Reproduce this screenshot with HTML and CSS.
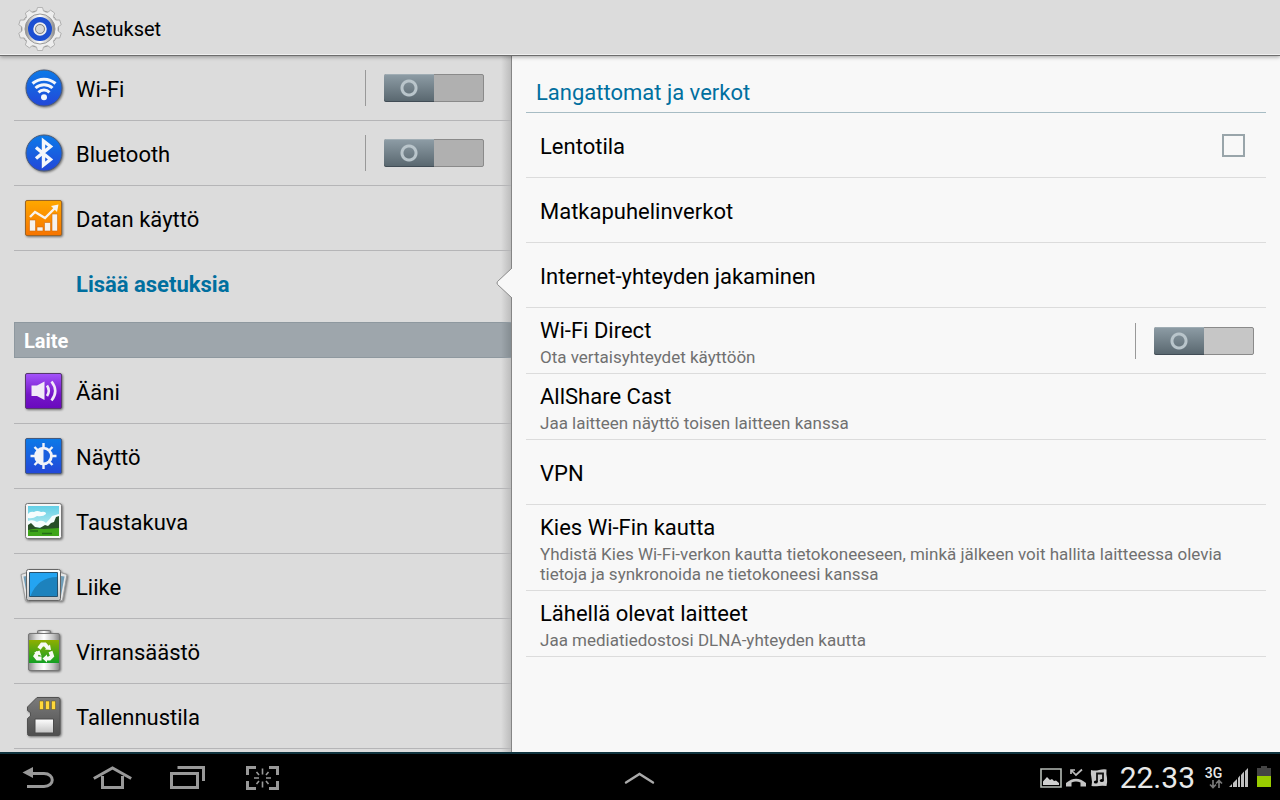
FILE: index.html
```
<!DOCTYPE html>
<html lang="fi">
<head>
    <meta charset="UTF-8">
    <meta name="viewport" content="width=device-width, initial-scale=1.0">
    <title>Asetukset</title>
    <link rel="stylesheet" href="styles.css">
</head>
<body>
    <!-- Shared gradients for the icons -->
    <svg class="defs" width="0" height="0" aria-hidden="true">
        <defs>
            <linearGradient id="blue" x2="0" y2="1"><stop stop-color="#0b7ae8"/><stop offset="1" stop-color="#2347d8"/></linearGradient>
            <linearGradient id="orange" x2="0" y2="1"><stop stop-color="#ffa800"/><stop offset="1" stop-color="#f77400"/></linearGradient>
            <linearGradient id="purple" x2="0" y2="1"><stop stop-color="#a454fb"/><stop offset=".6" stop-color="#7516c8"/><stop offset="1" stop-color="#6909bd"/></linearGradient>
            <linearGradient id="silver" x2="0" y2="1"><stop stop-color="#ffffff"/><stop offset="1" stop-color="#c4c4c4"/></linearGradient>
            <linearGradient id="metal"><stop stop-color="#8d8d8d"/><stop offset=".25" stop-color="#d8d8d8"/><stop offset=".5" stop-color="#ffffff"/><stop offset=".8" stop-color="#c2c2c2"/><stop offset="1" stop-color="#858585"/></linearGradient>
            <linearGradient id="green" x2="0" y2="1"><stop stop-color="#8fae00"/><stop offset="1" stop-color="#12a024"/></linearGradient>
            <linearGradient id="card" x2="0" y2="1"><stop stop-color="#7b7b7b"/><stop offset="1" stop-color="#4f4f4f"/></linearGradient>
            <linearGradient id="sky" x2="0" y2="1"><stop stop-color="#63cfe6"/><stop offset="1" stop-color="#d9f7f2"/></linearGradient>
        </defs>
    </svg>

    <header class="title-bar">
        <svg class="gear" width="48" height="48" viewBox="0 0 48 48" aria-hidden="true">
            <circle cx="24" cy="24" r="18.500" fill="#ededed" stroke="#9a9a9a"/>
            <g fill="#ededed" stroke="#a8a8a8" stroke-width=".8">
                <path id="tooth" d="M18.500 8Q21 6.500 21.500 2.500H26.500Q27 6.500 29.500 8M18.500 40Q21 41.500 21.500 45.500H26.500Q27 41.500 29.500 40"/>
                <use href="#tooth" transform="rotate(36 24 24)"/>
                <use href="#tooth" transform="rotate(72 24 24)"/>
                <use href="#tooth" transform="rotate(108 24 24)"/>
                <use href="#tooth" transform="rotate(144 24 24)"/>
            </g>
            <circle cx="24" cy="24" r="17.500" fill="#eeeeee"/>
            <circle cx="24" cy="24" r="15" fill="url(#metal)" stroke="#999999"/>
            <circle cx="24" cy="24" r="9" fill="none" stroke="#1c4fd2" stroke-width="6"/>
            <circle cx="24" cy="24" r="6" fill="#d4d4d4" stroke="#f0f0f0" stroke-width="1.500"/>
            <circle cx="24" cy="24" r="4.500" fill="#dadada" stroke="#858585"/>
        </svg>
        <h1>Asetukset</h1>
    </header>

    <main>
        <nav class="sidebar" aria-label="Asetukset">
            <ul class="menu">
                <li>
                    <svg class="icon" viewBox="0 0 48 48" aria-hidden="true">
                        <circle cx="24" cy="24" r="18" fill="url(#blue)" stroke="#4a5a78"/>
                        <g fill="none" stroke="#f4f7fb" stroke-width="3">
                            <path d="M12.500 19.500a17.500 17.500 0 0 1 23 0M15.500 24a12.500 12.500 0 0 1 17 0M18.500 28.300a8 8 0 0 1 11 0"/>
                        </g>
                        <circle cx="24" cy="33.200" r="3" fill="#f4f7fb"/>
                    </svg>
                    <a href="#wifi">Wi-Fi</a>
                    <input class="switch" type="checkbox" role="switch" aria-label="Wi-Fi">
                </li>
                <li>
                    <svg class="icon" viewBox="0 0 48 48" aria-hidden="true">
                        <circle cx="24" cy="24" r="18" fill="url(#blue)" stroke="#4a5a78"/>
                        <path d="M16 18.500 30.500 30.500 23.500 36V12L30.500 17.500 16 29.500" fill="none" stroke="#f4f7fb" stroke-width="3.400"/>
                    </svg>
                    <a href="#bluetooth">Bluetooth</a>
                    <input class="switch" type="checkbox" role="switch" aria-label="Bluetooth">
                </li>
                <li>
                    <svg class="icon" viewBox="0 0 48 48" aria-hidden="true">
                        <rect x="5.500" y="6.500" width="36" height="35" rx="1.500" fill="url(#orange)" stroke="#9a6528"/>
                        <g fill="#f5f2ef" stroke="#cf6b13" stroke-width=".6">
                            <path d="M9.500 26h6v11h-6zM17 33h6v4h-6zM24.500 28.500h6V37h-6zM32 20h5.500v17H32z"/>
                        </g>
                        <path d="M10 23 15 18 25 24 35 14" fill="none" stroke="#f8f4ef" stroke-width="2.400"/>
                        <path d="M31 12 38.500 10.500 37 18z" fill="#f8f4ef"/>
                    </svg>
                    <a href="#data">Datan käyttö</a>
                </li>
                <li class="selected">
                    <a href="#more" aria-current="page">Lisää asetuksia</a>
                    <svg class="pointer" viewBox="0 0 16 32" aria-hidden="true">
                        <path d="M16 1 1.500 14.500Q.5 16 1.500 17.500L16 31" fill="#f8f8f8" stroke="#8a8a8a"/>
                    </svg>
                </li>
            </ul>

            <h2>Laite</h2>

            <ul class="menu">
                <li>
                    <svg class="icon" viewBox="0 0 48 48" aria-hidden="true">
                        <rect x="5.500" y="6.500" width="36" height="35" rx="1.500" fill="url(#purple)" stroke="#57386e"/>
                        <path d="M11.500 18.500H17L24.500 14.500V33L17 29H11.500z" fill="#f1eaf7"/>
                        <path d="M27 18.500Q30.500 23.700 27 29M31.500 14.500Q39 24 31.500 33.500" fill="none" stroke="#f1eaf7" stroke-width="2.600"/>
                    </svg>
                    <a href="#sound">Ääni</a>
                </li>
                <li>
                    <svg class="icon" viewBox="0 0 48 48" aria-hidden="true">
                        <rect x="5.500" y="6.500" width="36" height="35" rx="1.500" fill="url(#blue)" stroke="#46597c"/>
                        <path d="M23.500 11v26M10.500 24h26M14.500 15 32.500 33M32.500 15 14.500 33" stroke="#f1f3f8" stroke-width="2.400"/>
                        <circle cx="23.500" cy="24" r="9.300" fill="#f1f3f8"/>
                        <path d="M23.500 17.500a6.500 6.500 0 0 1 0 13z" fill="#1a5fdf"/>
                    </svg>
                    <a href="#display">Näyttö</a>
                </li>
                <li>
                    <svg class="icon" viewBox="0 0 48 48" aria-hidden="true">
                        <rect x="5.500" y="6.500" width="36" height="35" rx="2" fill="#f6f6f6" stroke="#777777"/>
                        <path d="M8 9h31v30H8z" fill="url(#sky)"/>
                        <path d="M8 17Q10 14 14 15Q17 13 21 15Q26 14 26 17Q23 20 17 19Q13 22 8 21zM8 24Q13 22 17 25Q22 22 26 26Q30 22 32 19L39 17V30H8z" fill="#f5fdfd"/>
                        <path d="M8 28 11 26 15 30 20 31 25 28 28 29 31 26 34 25 36 20 39 19V35H8z" fill="#274f27"/>
                        <path d="M8 33Q16 31 24 32L39 31V39H8z" fill="#3fa51a"/>
                        <path d="M22 36.500h10M10 34h8" stroke="#236c17" stroke-width="1.500"/>
                    </svg>
                    <a href="#wallpaper">Taustakuva</a>
                </li>
                <li>
                    <svg class="icon" viewBox="0 0 48 48" aria-hidden="true">
                        <g fill="#e6e6e6" stroke="#9b9b9b">
                            <path d="M1 12.500 9 10V39L5.500 38.500zM47 12.500 39 10V39L42.500 38.500z"/>
                        </g>
                        <path d="M3.500 14.500 7 14V34zM44.500 14.500 41 14V34z" fill="#6f9db8"/>
                        <rect x="6.500" y="7.500" width="34" height="31" rx="2" fill="url(#silver)" stroke="#666666"/>
                        <path d="M9.500 10.500h28v24h-28z" fill="#1d82bd" stroke="#28516c"/>
                        <path d="M10 11H37V15Q18 15 10.500 34H10z" fill="#24a4f1"/>
                    </svg>
                    <a href="#motion">Liike</a>
                </li>
                <li>
                    <svg class="icon" viewBox="0 0 48 48" aria-hidden="true">
                        <rect x="17.500" y="3.500" width="13" height="5" rx="1" fill="url(#metal)" stroke="#777777"/>
                        <rect x="8.500" y="6.500" width="31" height="37" rx="1.500" fill="url(#metal)" stroke="#777777"/>
                        <path d="M9 13h30v23H9z" fill="url(#green)"/>
                        <g fill="none" stroke="#f7fbf5" stroke-width="4">
                            <path d="M19 21.500 22 17.500H25L28 21M30.500 24.500 32 29 29.500 31.500H25.500M21.500 31.500H17.500L15.500 29 18 25"/>
                        </g>
                        <path d="M25 22.500 31 23 30 17.500zM27 27.500V35.500L22.500 31.500zM14 25.500 19.500 23.500 21.500 29z" fill="#f7fbf5"/>
                    </svg>
                    <a href="#power">Virransäästö</a>
                </li>
                <li>
                    <svg class="icon" viewBox="0 0 48 48" aria-hidden="true">
                        <path d="M17 5.500H38Q40 5.500 40 7.500V41.500Q40 43.500 38 43.500H9Q7.500 43.500 7.500 41.500V26.500L10.500 24V20.500L7.500 18.500V15z" fill="url(#card)" stroke="#515151"/>
                        <path d="M19.500 9h4v8.500h-4zM25.500 9h4v8.500h-4zM31.500 9h4v8.500h-4z" fill="#ffd83a" stroke="#5a5127" stroke-width=".5"/>
                        <path d="M15 27h18.500v14H15z" fill="url(#silver)" stroke="#4c4c4c"/>
                    </svg>
                    <a href="#storage">Tallennustila</a>
                </li>
            </ul>
        </nav>

        <section class="content">
            <h2>Langattomat ja verkot</h2>
            <ul class="settings">
                <li>
                    <label for="airplane">Lentotila</label>
                    <input id="airplane" class="check" type="checkbox">
                </li>
                <li><a href="#mobile">Matkapuhelinverkot</a></li>
                <li><a href="#tethering">Internet-yhteyden jakaminen</a></li>
                <li class="detailed">
                    <div>
                        <a href="#direct">Wi-Fi Direct</a>
                        <p>Ota vertaisyhteydet käyttöön</p>
                    </div>
                    <input class="switch light" type="checkbox" role="switch" aria-label="Wi-Fi Direct">
                </li>
                <li class="detailed">
                    <div>
                        <a href="#cast">AllShare Cast</a>
                        <p>Jaa laitteen näyttö toisen laitteen kanssa</p>
                    </div>
                </li>
                <li><a href="#vpn">VPN</a></li>
                <li class="detailed">
                    <div>
                        <a href="#kies">Kies Wi-Fin kautta</a>
                        <p>Yhdistä Kies Wi-Fi-verkon kautta tietokoneeseen, minkä jälkeen voit hallita laitteessa olevia tietoja ja synkronoida ne tietokoneesi kanssa</p>
                    </div>
                </li>
                <li class="detailed">
                    <div>
                        <a href="#nearby">Lähellä olevat laitteet</a>
                        <p>Jaa mediatiedostosi DLNA-yhteyden kautta</p>
                    </div>
                </li>
            </ul>
        </section>
    </main>

    <footer class="system-bar">
        <div class="nav-buttons">
            <button type="button" aria-label="Takaisin">
                <svg width="40" height="24" viewBox="0 0 40 24"><path d="M14 7.500H26C37 7.500 37 20.500 26 20.500H9" fill="none" stroke="#999999" stroke-width="3"/><path d="M4.500 6.500 15 1V12z" fill="#999999"/></svg>
            </button>
            <button type="button" aria-label="Koti">
                <svg width="40" height="24" viewBox="0 0 40 24"><path d="M.8 12.500 19.500 2 38.200 12.500M9.500 10V21.500H29.500V10" fill="none" stroke="#999999" stroke-width="3"/></svg>
            </button>
            <button type="button" aria-label="Viimeisimmät">
                <svg width="40" height="24" viewBox="0 0 40 24"><path d="M3.500 7.500H29.500V21.500H3.500zM9.500 1.500H35.500V15" fill="none" stroke="#999999" stroke-width="3"/></svg>
            </button>
            <button type="button" aria-label="Kuvakaappaus">
                <svg width="40" height="24" viewBox="0 0 40 24"><path d="M4.500 9V1.500H13M26 1.500H34.500V9M34.500 15V22.500H26M13 22.500H4.500V15" fill="none" stroke="#999999" stroke-width="3"/><path d="M19.500 2.500v6M19.500 15.500v6M11 12h5M23 12h5M13.500 6 16 9M25.500 6 23 9M13.500 18 16 15M25.500 18 23 15" stroke="#999999" stroke-width="1.600"/></svg>
            </button>
        </div>

        <button type="button" class="drawer" aria-label="Avaa sovellukset">
            <svg width="32" height="16" viewBox="0 0 32 16"><path d="M2 12.500 15.500 4 29 12.500" fill="none" stroke="#aaaaaa" stroke-width="2.400" stroke-linecap="round"/></svg>
        </button>

        <div class="status">
            <svg width="22" height="24" viewBox="0 0 22 24" aria-hidden="true"><path d="M1 3h20v18H1z" fill="none" stroke="#b5bbb5" stroke-width="1.600"/><path d="M3 19V15.500L7 11 10 14 12 13 14 15 16 14.500 19 17V19z" fill="#d0d0d0"/></svg>
            <svg width="22" height="24" viewBox="0 0 22 24" aria-hidden="true"><path d="M6 4 11 9 17 3.500M6 8V4H10" fill="none" stroke="#bbbbbb" stroke-width="1.700"/><path d="M1 20.500V17Q11 8.500 21 17V20.500H15.500V16.500Q11 14.500 6.500 16.500V20.500z" fill="#c4c4c4"/></svg>
            <svg width="18" height="24" viewBox="0 0 18 24" aria-hidden="true"><path d="M1 4Q5 5 9 4Q13 3 16.500 3.500Q16 8 17 12Q17.500 16 16.500 20Q12 19.500 9 20Q5 20.500 1.500 20Q2.500 16 1.500 12Q.5 8 1 4z" fill="#c8c8c8"/><path d="M7 16V7.500H13V14.500" fill="none" stroke="#111111" stroke-width="1.800"/><ellipse cx="5.800" cy="16" rx="2" ry="1.600"/><ellipse cx="11.800" cy="14.500" rx="2" ry="1.600"/></svg>
            <time datetime="22:33">22.33</time>
            <div class="network">
                <span>3G</span>
                <svg width="14" height="10" viewBox="0 0 14 10" aria-hidden="true"><path d="M4 1V8M1 5.500 4 8.500 7 5.500M10 9V2M7 4.500 10 1.500 13 4.500" fill="none" stroke="#777777" stroke-width="1.700"/></svg>
            </div>
            <svg width="20" height="24" viewBox="0 0 20 24" aria-hidden="true"><path d="M0 21 3 18V21zM4 17 8 13V21H4zM9 12 11 9.500V21H9zM12 9 15 5.500V21H12zM16 5 19 2V21H16z" fill="#c0c0c0"/></svg>
            <svg width="14" height="24" viewBox="0 0 14 24" aria-hidden="true"><path d="M0 2H4V0H10V2H14V10H0z" fill="#444444"/><path d="M0 10H14V21H0z" fill="#99cc00"/></svg>
        </div>
    </footer>
</body>
</html>
```
FILE: styles.css
```
:root {
    --accent: #006f9f;
    --panel: #dcdcdc;
    --content: #f8f8f8;
    --divider: #b5b5b7;
    --divider-light: #dcdcdc;
}

* {
    box-sizing: border-box;
}

body {
    display: flex;
    flex-direction: column;
    height: 100vh;
    margin: 0;
    font-family: Roboto, "Liberation Sans", sans-serif;
    font-size: 22px;
    line-height: 28px;
    color: #000;
    background: var(--content);
}

h1, h2, p, ul {
    margin: 0;
    padding: 0;
    font-weight: 400;
}

ul {
    list-style: none;
}

a {
    color: inherit;
    text-decoration: none;
}

svg {
    flex: none;
    display: block;
}

.defs {
    position: absolute;
}

.title-bar {
    position: relative;
    z-index: 2;
    display: flex;
    align-items: center;
    gap: 8px;
    padding: 5px 16px 2px;
    background: var(--panel);
    border-bottom: 1px solid #6d6d6d;
    box-shadow: 0 1px 4px rgba(0, 0, 0, 0.35), inset 0 -1px #f0f0f0;
}

.title-bar h1 {
    font-size: 20px;
}

main {
    display: grid;
    grid-template-columns: 2fr 3fr;
    flex: 1;
    min-height: 0;
}

/* Left pane */
.sidebar {
    padding-left: 14px;
    min-height: 0;
    background: linear-gradient(to left, #bcbcbc, var(--panel) 10px);
    border-right: 1px solid #858585;
}

.menu li {
    position: relative;
    display: flex;
    align-items: center;
    gap: 8px;
    height: 65px;
    padding: 0 27px 0 6px;
    border-bottom: 1px solid var(--divider);
}

.menu a {
    flex: 1;
    padding-top: 3px;
}

.icon {
    width: 48px;
    height: 48px;
    filter: drop-shadow(1px 1px 1px rgba(0, 0, 0, 0.5));
}

.menu .selected {
    padding-left: 62px;
    border-bottom: 0;
    font-weight: 700;
    color: var(--accent);
}

.pointer {
    position: absolute;
    top: 16px;
    right: -1px;
    width: 16px;
    height: 32px;
}

.sidebar h2 {
    margin: 6px 0 1px;
    padding: 4px 9px 2px;
    border: 1px solid #8e989f;
    border-right: 0;
    background: linear-gradient(to left, #858d92, #9ea6ac 10px);
    font-size: 20px;
    font-weight: 700;
    color: #fff;
}

/* Right pane */
.content {
    padding: 20px 14px 0;
    background: var(--content);
}

.content h2 {
    padding: 3px 10px 5px;
    border-bottom: 1px solid #a7bcc4;
    font-size: 22px;
    color: var(--accent);
}

.settings li {
    display: flex;
    align-items: center;
    justify-content: space-between;
    min-height: 65px;
    padding: 0 12px 0 14px;
    border-bottom: 1px solid var(--divider-light);
}

.settings a,
.settings label {
    padding-top: 3px;
}

.settings .detailed div {
    padding: 9px 0 6px;
}

.settings .detailed a {
    display: block;
    padding-top: 0;
}

.settings p {
    padding-top: 2px;
    font-size: 17px;
    line-height: 20px;
    color: #707070;
}

/* Controls */
.switch {
    position: relative;
    flex: none;
    appearance: none;
    width: 100px;
    height: 28px;
    margin: 0;
    border: 1px solid #8a8a8a;
    border-radius: 2px;
    background: #b0b0b0;
}

.switch.light {
    background: #c6c6c6;
}

.switch::before {
    content: "";
    position: absolute;
    top: -5px;
    left: -20px;
    width: 1px;
    height: 36px;
    background: #999;
}

.switch::after {
    content: "";
    position: absolute;
    top: -1px;
    left: -1px;
    width: 50px;
    height: 28px;
    border-radius: 2px 0 0 2px;
    background:
        radial-gradient(circle at 25px 14px, transparent 5px, #b9c5cb 6px, #b9c5cb 8px, transparent 9px),
        linear-gradient(#8e9da6, #58666e);
    box-shadow: inset 0 1px #a0adb4, inset 0 -1px #414c55;
}

.switch:checked::after {
    left: 49px;
}

.check {
    appearance: none;
    width: 23px;
    height: 23px;
    margin: 0 9px 0 0;
    border: 2px solid #99a5aa;
    background: var(--content);
}

.check:checked {
    background: #99a5aa;
}

/* Bottom bar */
.system-bar {
    position: relative;
    z-index: 2;
    display: grid;
    grid-template-columns: 1fr auto 1fr;
    align-items: center;
    height: 48px;
    border-top: 2px solid #10343f;
    background: #000;
}

.system-bar button {
    display: flex;
    align-items: center;
    justify-content: center;
    height: 46px;
    padding: 0;
    border: 0;
    background: none;
}

.nav-buttons {
    display: flex;
}

.nav-buttons button {
    width: 75px;
}

.status {
    display: flex;
    align-items: center;
    justify-content: flex-end;
    gap: 3px;
    padding-right: 9px;
    color: #e8e8e8;
}

.status time {
    margin: 0 6px 0 9px;
    font-size: 30px;
    line-height: 48px;
}

.network {
    display: flex;
    flex-direction: column;
    align-items: center;
    margin-right: 3px;
    font-size: 14px;
    font-weight: 500;
    line-height: 12px;
}

.status svg:last-child {
    margin-left: 5px;
}
```
